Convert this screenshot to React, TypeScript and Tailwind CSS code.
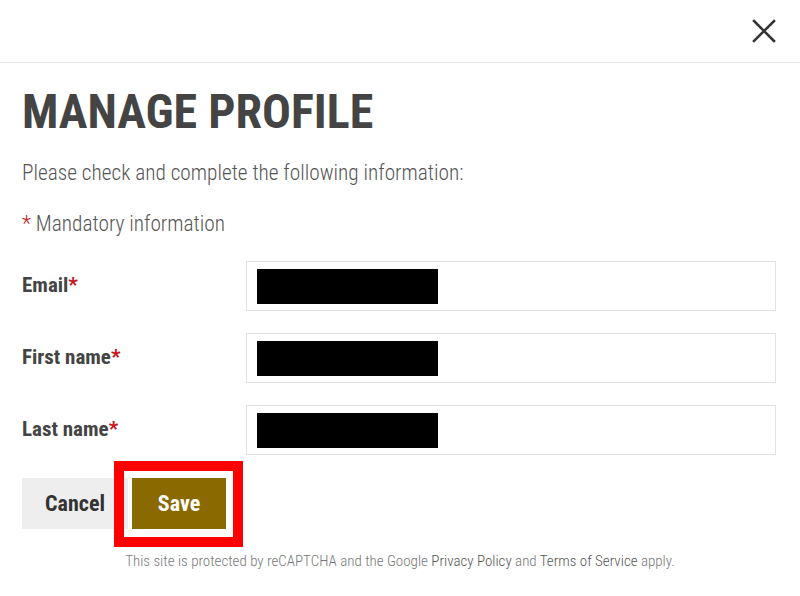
import React from "react";

const font = { fontFamily: "Roboto, 'Liberation Sans', sans-serif" };

function Field({ label }: { label: string }) {
  return (
    <div className="flex items-center h-[50px]">
      <label className="w-[224px] text-[21px] font-bold text-[#444] font-stretch-condensed">
        {label}
        <span className="text-[#c4161c]">*</span>
      </label>
      <div className="flex-1 h-[50px] border border-[#e2e2e2] bg-white flex items-center pl-[10px]">
        <div className="w-[181px] h-[35px] bg-black" />
      </div>
    </div>
  );
}

export default function App() {
  return (
    <div className="w-[800px] h-[596px] bg-white overflow-hidden" style={font}>
      <div className="h-[63px] border-b border-[#e6e6e6] flex items-center justify-end pr-[24px]">
        <svg width="24" height="24" viewBox="0 0 24 24" className="text-[#333]">
          <path d="M2 2 L22 22 M22 2 L2 22" stroke="currentColor" strokeWidth="2.6" strokeLinecap="square" />
        </svg>
      </div>
      <div className="px-[22px]">
        <h1 className="mt-[19px] text-[48px] leading-[60px] font-bold text-[#444] font-stretch-condensed">
          MANAGE PROFILE
        </h1>
        <p className="mt-[17px] text-[21.3px] leading-[28px] font-light text-[#555] font-stretch-condensed">
          Please check and complete the following information:
        </p>
        <p className="mt-[23px] text-[21.3px] leading-[28px] font-light text-[#555] font-stretch-condensed">
          <span className="text-[#c4161c]">*</span> Mandatory information
        </p>
        <div className="mt-[23px] mr-[2px] flex flex-col gap-[22px]">
          <Field label="Email" />
          <Field label="First name" />
          <Field label="Last name" />
        </div>
        <div className="mt-[23px] flex gap-[4px] relative">
          <button className="w-[106px] h-[51px] bg-[#eeeeee] text-[22px] font-bold text-[#333] font-stretch-condensed">
            Cancel
          </button>
          <button className="w-[94px] h-[51px] bg-[#8a6a00] text-[22px] font-bold text-white font-stretch-condensed">
            Save
          </button>
          <div className="absolute left-[92px] top-[-17px] w-[129px] h-[86px] border-[10px] border-[#ff0000] pointer-events-none" />
        </div>
        <p className="mt-[21px] text-center text-[15px] font-light text-[#777] font-stretch-condensed">
          This site is protected by reCAPTCHA and the Google{" "}
          <span className="text-[#555]">Privacy Policy</span> and{" "}
          <span className="text-[#555]">Terms of Service</span> apply.
        </p>
      </div>
    </div>
  );
}
